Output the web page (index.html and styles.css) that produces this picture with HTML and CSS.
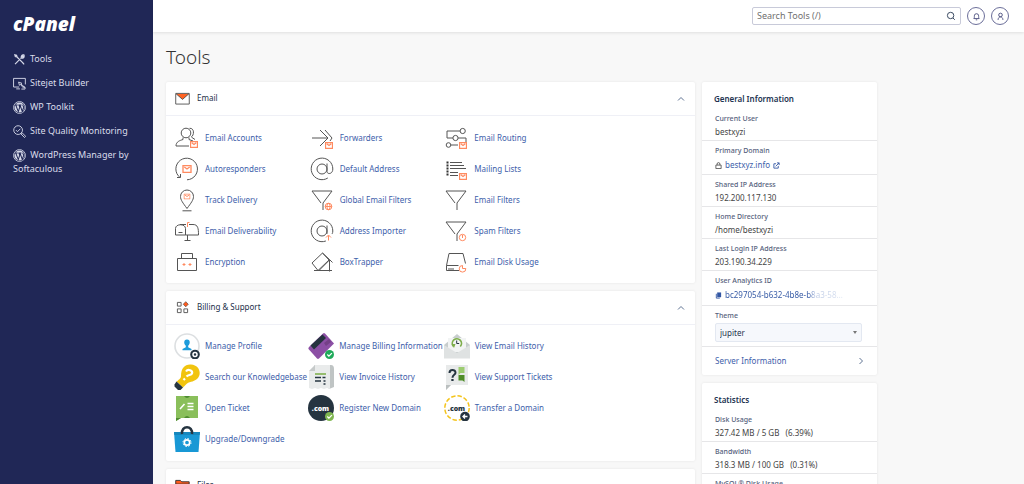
FILE: index.html
```html
<!DOCTYPE html>
<html lang="en">
<head>
<meta charset="utf-8">
<title>cPanel - Tools</title>
<link rel="stylesheet" href="styles.css">
</head>
<body>
<svg class="defs" aria-hidden="true">
  <symbol id="mail" viewBox="0 0 7 6"><path class="orange" d="M.5.5h6v5h-6zM1.500 1.500l2 1.500 2-1.500"/></symbol>
  <symbol id="wp" viewBox="0 0 14 14"><circle cx="7" cy="7" r="6.400" fill="none" stroke="#d5d8e8" stroke-width=".9"/><circle cx="7" cy="7" r="5.400" fill="#d5d8e8"/><path d="M2 4.300h3M3 4.400l2.700 7 1.600-4.800-1-2.200M5.800 4.300h3.300M7.600 4.500l2.400 6.800 1.500-4.500c.2-1-1.200-1.700-.8-3" fill="none" stroke="#202756" stroke-width="1.100"/></symbol>
  <symbol id="funnel" viewBox="0 0 24 24"><path class="line" d="M2 3h20l-9 12v7M2 3l9 12"/></symbol>
  <symbol id="at" viewBox="0 0 24 24"><circle class="line" cx="12" cy="12" r="5"/><path class="line" d="M17 6.500v8c0 3 5.800 3 5.800-2.500a10.800 10.800 0 1 0-5 9"/></symbol>
</svg>
<div class="app">
  <aside class="sidebar">
    <a class="logo" href="#">cPanel</a>
    <nav class="nav">
      <a href="#"><svg viewBox="0 0 14 14"><path class="pale thick" d="M4 4l7.500 7.500M2 2l1.800.5L4.500 4.500l-2-.6zM10 10l2 2.200M2.200 12L7 7.200M8 6l1-1c-.5-1.500.5-3 2-3L9.700 3.500l.9.900L12 3c.3 1.700-1.300 3-3 2.500"/></svg>Tools</a>
      <a href="#"><svg viewBox="0 0 14 14"><path class="pale" d="M13.300 8V1.500H.6v9.300h6M3.500 12.800h4M6 5.500l1 3.500 1-1 3.500 4 1-1L8.500 7.500l1-.8zM11 10l2 1v2H9"/></svg>Sitejet Builder</a>
      <a href="#"><svg><use href="#wp"/></svg>WP Toolkit</a>
      <a href="#"><svg viewBox="0 0 14 14"><circle class="pale" cx="5.500" cy="5.500" r="4.700"/><path class="pale" d="M3.200 5.500l1.600 1.700L8 4M8.700 8.700l1-.4 3.900 3.900-1.200 1.300-3.900-3.900z"/></svg>Site Quality Monitoring</a>
      <a href="#"><svg><use href="#wp"/></svg> WordPress Manager by Softaculous</a>
    </nav>
  </aside>
  <div class="page">
    <header class="topbar">
      <form class="search" role="search">
        <input type="search" placeholder="Search Tools (/)" aria-label="Search Tools">
        <button type="button" aria-label="Search"><svg viewBox="0 0 10 10"><circle class="ink" cx="4.600" cy="4.500" r="3.200"/><path class="ink" d="M7 7l1.800 1.800"/></svg></button>
      </form>
      <button class="round" type="button" aria-label="Notifications"><svg viewBox="0 0 10 10"><path class="navy" d="M2 7.300h6c-.8-1-.6-2-.6-3a2.400 2.400 0 0 0-4.800 0c0 1 .2 2-.6 3zM4.200 8.700h1.600"/></svg></button>
      <button class="round" type="button" aria-label="Account"><svg viewBox="0 0 10 10"><circle class="navy" cx="5" cy="3.300" r="2"/><path class="navy" d="M2.300 8.800c0-4.500 5.400-4.500 5.400 0"/></svg></button>
    </header>
    <main class="content">
      <h1>Tools</h1>
      <div class="columns">
        <div class="groups">
          <section class="card">
            <header class="card-head">
              <svg class="head-icon" viewBox="0 0 16 14"><path d="M1 2h14L8 8z" fill="#ff6323"/><path class="line" d="M.7 1.500h14.600v11.500H.7zM1 1.800L8 8l7-6.200"/></svg>
              <h2>Email</h2>
              <button class="toggle" type="button" aria-label="Collapse Email"><svg viewBox="0 0 8 6"><path class="slate" d="M1 4.500l3-3 3 3"/></svg></button>
            </header>
            <div class="items">
              <a href="#"><svg viewBox="0 0 24 24"><circle class="line" cx="11" cy="7" r="4.800"/><path class="line" d="M14.500 2.300c5-.5 5 7 1.500 9M8 11.500v2c-3 1-7 2-7 6.500h13M14 11.500v2l4 1.500M17 11.500l3 2"/><use href="#mail" x="15" y="15" width="8" height="7"/></svg>Email Accounts</a>
              <a href="#"><svg viewBox="0 0 24 24"><path class="line" d="M2 12h15M10 4l8 8-8 8M15 4l7 8-2 3"/><use href="#mail" x="15" y="16" width="8" height="7"/></svg>Forwarders</a>
              <a href="#"><svg viewBox="0 0 24 24"><path class="line" d="M16 5H3v7h6M14 12h8v4M7 19h7"/><circle class="line" cx="18.700" cy="5" r="2.600"/><circle class="line" cx="11.500" cy="12" r="2.600"/><circle class="line" cx="4.500" cy="19" r="2.300"/><use href="#mail" x="15" y="16" width="8" height="7"/></svg>Email Routing</a>
              <a href="#"><svg viewBox="0 0 24 24"><path class="line" d="M12 22.800A10.800 10.800 0 1 0 5 20.500M2 20.500h3.500V17"/><use href="#mail" x="7" y="8" width="10" height="8"/></svg>Autoresponders</a>
              <a href="#"><svg><use href="#at"/></svg>Default Address</a>
              <a href="#"><svg viewBox="0 0 24 24"><path class="dots" d="M3.500 4.500v15"/><path class="line" d="M6 5.500h12M6 8.500h14M6 11.500h16M6 15.500h8M6 18.500h8"/><use href="#mail" x="15" y="16" width="8" height="7"/></svg>Mailing Lists</a>
              <a href="#"><svg viewBox="0 0 24 24"><path class="line" d="M12 20.500C8 15 5.500 12 5.500 8.500a6.500 6.500 0 0 1 13 0c0 3.500-2.500 6.500-6.500 12zM7.500 22.800h9"/><use href="#mail" x="8.500" y="5.500" width="7" height="6"/></svg>Track Delivery</a>
              <a href="#"><svg viewBox="0 0 24 24"><use href="#funnel"/><circle cx="18.500" cy="18.500" r="4" fill="#fff"/><circle class="orange" cx="18.500" cy="18.500" r="3.300"/><path class="orange" d="M15.200 18.500h6.600M18.500 15.200c-2 2-2 4.600 0 6.600 2-2 2-4.600 0-6.600z"/></svg>Global Email Filters</a>
              <a href="#"><svg><use href="#funnel"/></svg>Email Filters</a>
              <a href="#"><svg viewBox="0 0 24 24"><path class="line" d="M.5 16V9.500c0-5 10-5 10 0V16zM5 5.500h13c5 0 5.500 4 5.500 10.500h-13M3.500 13.500h4M12.500 16v5.500M9.500 21.500h6"/><path d="M11 4h3v4h-3z" fill="#fff"/><path class="orange" d="M12.500 8V3.500h2"/></svg>Email Deliverability</a>
              <a href="#"><svg viewBox="0 0 24 24"><use href="#at"/><path d="M16 15h6v8h-6z" fill="#fff"/><path class="orange" d="M18.500 21.500v-5M16 18.500l2.500-2.500 2.500 2.500"/></svg>Address Importer</a>
              <a href="#"><svg viewBox="0 0 24 24"><use href="#funnel"/><circle cx="18.500" cy="18.500" r="4" fill="#fff"/><circle class="orange" cx="18.500" cy="18.500" r="3.200"/><path class="orange" d="M18.500 16v3"/></svg>Spam Filters</a>
              <a href="#"><svg viewBox="0 0 24 24"><path class="line" d="M2.500 8.500h19v12h-19zM6.500 8.500v-5h11v5"/><path class="orange" d="M7.500 14.500h3M9 13v3M13.500 14.500h3M15 13v3"/></svg>Encryption</a>
              <a href="#"><svg viewBox="0 0 24 24"><path class="line" d="M12.500 3L2 13l6 7.500L19 10zM12.500 3l7 6.500M19.500 9.500v12M4 20.500h18M19.500 9.500l3 3M9 20.500l10-10"/></svg>BoxTrapper</a>
              <a href="#"><svg viewBox="0 0 24 24"><path class="line" d="M15 20.500H2.500v-5L5 3.500h14l2.500 10M2.500 15.500h12M5 20v-2M7 20v-2M9 20v-2"/><path class="orange" d="M18.500 15.500v3h3.300a3.300 3.300 0 1 1-3.300-3z"/></svg>Email Disk Usage</a>
            </div>
          </section>

          <section class="card">
            <header class="card-head">
              <svg class="head-icon" viewBox="0 0 16 14"><path class="line" d="M2.500 1.500h4v4h-4zM2.500 8.500h4v4h-4zM9.500 8.500h4v4h-4z"/><path d="M11.500.7l2.700 2.800-2.700 2.800-2.700-2.800z" fill="#ff5a1c" stroke="#333" stroke-width=".6"/></svg>
              <h2>Billing &amp; Support</h2>
              <button class="toggle" type="button" aria-label="Collapse Billing &amp; Support"><svg viewBox="0 0 8 6"><path class="slate" d="M1 4.500l3-3 3 3"/></svg></button>
            </header>
            <div class="items colour">
              <a href="#"><svg viewBox="0 0 26 26"><circle cx="13" cy="13" r="12" fill="#fff" stroke="#dcdfe1" stroke-width="1.600"/><path d="M13 6.500c-4 0-3 5-1.200 6.200v1.500L8.500 16v1.200h9V16l-3.300-1.800v-1.500C16 11.500 17 6.500 13 6.500z" fill="#1d9bdb"/><circle cx="21" cy="21.500" r="4.800" fill="#253440"/><circle cx="21" cy="21.500" r="2" fill="none" stroke="#fff" stroke-width="1.500"/></svg>Manage Profile</a>
              <a href="#"><svg viewBox="0 0 26 26"><path d="M1 14L15 0.500q1-.8 2 0L26 10.500 11 25.500q-1 .8-2 0L.5 16q-.4-1 .5-2z" fill="#8c4fa5"/><path d="M2.500 12.500L14.500 1.500l3.500 3.500L6 16.500z" fill="#26323f"/><path d="M16 10l5-4 2 3-5 4z" fill="#744087"/><circle cx="21.500" cy="21.500" r="4.500" fill="#1faa5a"/><path class="tick" d="M19.300 21.500l1.600 1.600 3-3"/></svg>Manage Billing Information</a>
              <a href="#"><svg viewBox="0 0 26 26"><path d="M0 12L13 1l13 11v13H0z" fill="#c7cdcd"/><path d="M4 5h18v14H4z" fill="#f2f4f4"/><path d="M0 12l13 8 13-8v13.500H0z" fill="#dfe2e2"/><path d="M9.300 13.300A4.600 4.600 0 1 1 16.300 13.500" fill="none" stroke="#7eae4b" stroke-width="1.700"/><path d="M7.500 11h4l-1.500 4z" fill="#7eae4b"/><path d="M12.700 7.500v3h2.500" stroke="#253440" fill="none"/></svg>View Email History</a>
              <a href="#"><svg viewBox="0 0 26 26"><path d="M7 12C7 4 11 0 17 .5c9 .5 11 10 6 14.500-4 3.500-8 2-11.500 6L9 23.500 2.500 17.500C6 15 7 14 7 12z" fill="#f1c40f"/><path d="M2.500 17.500l6.500 6-2.500 2.500H4L.5 22.500v-2z" fill="#253440"/><path d="M12 7.500c2-3 7-1 6 2-1 2-3.500 1-5.500 3M11 14.500l-1.500 1.500" fill="none" stroke="#fff" stroke-width="2.200"/></svg>Search our Knowledgebase</a>
              <a href="#"><svg viewBox="0 0 26 26"><path d="M6 1h17q3 0 3 4v18l-5 2z" fill="#bfc4c4"/><path d="M1 7l6-6h15v24l-3-1-3 1-3-1-3 1-3-1-3 1-3-1z" fill="#e9ebeb"/><path d="M1 7l6-6v6z" fill="#c6caca"/><path d="M7 10h11" stroke="#78ad45" stroke-width="1.500"/><path d="M7 13.500h6M14.500 13.500h3M7 17h6M15.500 17h2M15.500 20h2" stroke="#253440" stroke-width="1.700"/></svg>View Invoice History</a>
              <a href="#"><svg viewBox="0 0 26 26"><path d="M2 1h22v20H7l-5 5z" fill="#e8eaea"/><path d="M2 26v-5h5z" fill="#bbc0c0"/><path d="M5.500 9c0-4 6-4 6-.3 0 2.300-3 2-3 5" fill="none" stroke="#253440" stroke-width="2"/><path d="M7.300 15h2.300v2H7.300z" fill="#253440"/><path d="M14.500 3h6v6h-4l-2 2z" fill="#9ccc70"/><path d="M14.500 11h6v7l-2-1.500h-4z" fill="#4f8d28"/></svg>View Support Tickets</a>
              <a href="#"><svg viewBox="0 0 26 26"><path d="M2 1h22v22H7l-5 3z" fill="#8abf5b"/><path d="M2 26v-3h5z" fill="#4e8b31"/><path d="M10 1h6q-3 4-6 0zM10 23h6q-3-4-6 0z" fill="#4e8b31"/><path d="M6 14l4.500-5M13.500 8.500h6M13.500 11.500h6M13.500 14.500h6" stroke="#fff" stroke-width="1.600"/></svg>Open Ticket</a>
              <a href="#"><svg viewBox="0 0 26 26"><circle cx="13" cy="13" r="13" fill="#253440"/><text class="domain" x="12.500" y="15.500" fill="#fff">.com</text><circle cx="21.500" cy="21.500" r="4.500" fill="#7fb650"/><path class="tick" d="M19.300 21.500l1.600 1.600 3-3"/></svg>Register New Domain</a>
              <a href="#"><svg viewBox="0 0 26 26"><circle cx="13" cy="13" r="12.200" fill="#fff" stroke="#f4c41c" stroke-width="1.500" stroke-dasharray="4.400 2"/><text class="domain" x="12.500" y="15.500" fill="#253440">.com</text><circle cx="21" cy="21.500" r="4.800" fill="#253440"/><path class="tick" d="M23.500 21.500h-4.500M21 19.500l-2 2 2 2"/></svg>Transfer a Domain</a>
              <a href="#"><svg viewBox="0 0 26 26"><path d="M0 6h26l-1.500 20h-23z" fill="#1898d5"/><path d="M0 6h26l-.4 3H.4z" fill="#1687bd"/><path d="M8 8c-1-9 11-9 10 0" fill="none" stroke="#253440" stroke-width="2.500"/><circle cx="13" cy="16.500" r="2.700" fill="none" stroke="#fff" stroke-width="1.700"/><circle cx="13" cy="16.500" r="4" fill="none" stroke="#fff" stroke-width="1" stroke-dasharray="1.600 1.540"/></svg>Upgrade/Downgrade</a>
            </div>
          </section>

          <section class="card">
            <header class="card-head">
              <svg class="head-icon" viewBox="0 0 16 14"><path d="M.7 1.500h5l1.500 1.500h8v10H.7z" fill="#ff5a1c" stroke="#333"/><path d="M1 5.500h14" stroke="#333"/></svg>
              <h2>Files</h2>
              <button class="toggle" type="button" aria-label="Collapse Files"><svg viewBox="0 0 8 6"><path class="slate" d="M1 4.500l3-3 3 3"/></svg></button>
            </header>
          </section>
        </div>

        <aside class="side">
          <section class="card">
            <h2 class="side-title">General Information</h2>
            <dl class="info">
              <div><dt>Current User</dt><dd>bestxyzi</dd></div>
              <div class="tall"><dt>Primary Domain</dt><dd><svg viewBox="0 0 8 8"><path class="lock" d="M1 3.500h6v4H1zM2.400 3.500V2.300a1.600 1.600 0 0 1 3.200 0v1.200"/></svg><a href="#">bestxyz.info</a><svg class="out" viewBox="0 0 8 8"><path class="blue" d="M3.500 2H1v5h5V4.500M3 5l4-4M4.500 1H7v2.500"/></svg></dd></div>
              <div><dt>Shared IP Address</dt><dd>192.200.117.130</dd></div>
              <div><dt>Home Directory</dt><dd>/home/bestxyzi</dd></div>
              <div><dt>Last Login IP Address</dt><dd>203.190.34.229</dd></div>
              <div class="taller"><dt>User Analytics ID</dt><dd><svg viewBox="0 0 8 8"><path d="M2.500.5h4.500v5.500H2.500z" fill="#3156a3"/><path class="blue" d="M1.500 2v5H5.500"/></svg><a class="fade" href="#">bc297054-b632-4b8e-b8a3-58…</a></dd></div>
            </dl>
            <div class="theme">
              <label for="theme">Theme</label>
              <div class="select"><select id="theme"><option>jupiter</option></select></div>
            </div>
            <a class="server" href="#">Server Information<svg viewBox="0 0 6 8"><path class="slate" d="M1.500 1l3 3-3 3"/></svg></a>
          </section>
          <section class="card">
            <h2 class="side-title">Statistics</h2>
            <dl class="info">
              <div><dt>Disk Usage</dt><dd>327.42 MB / 5 GB &nbsp; (6.39%)</dd></div>
              <div><dt>Bandwidth</dt><dd>318.3 MB / 100 GB &nbsp; (0.31%)</dd></div>
              <div><dt>MySQL® Disk Usage</dt></div>
            </dl>
          </section>
        </aside>
      </div>
    </main>
  </div>
</div>
</body>
</html>
```
FILE: styles.css
```css
* { box-sizing: border-box; }
body {
  margin: 0;
  background: #f8f8f8;
  color: #444;
  font: 8px/12px "Noto Sans", sans-serif;
}
a { color: #3d60aa; text-decoration: none; }
button { padding: 0; border: 0; background: none; }
h1, h2, dl, dd { margin: 0; }
svg { flex: none; }
.defs { position: absolute; width: 0; height: 0; }

.line, .pale, .orange, .navy, .ink, .slate, .blue, .lock, .tick { fill: none; }
.line { stroke: #555; stroke-width: 1; }
.pale { stroke: #d5d8e8; stroke-width: 1; }
.thick { stroke-width: 1.3px; }
.orange { stroke: #ff8a60; stroke-width: 1; }
.navy { stroke: #474b7c; stroke-width: 1; }
.ink { stroke: #3c4c63; stroke-width: 1; }
.slate { stroke: #5f7393; stroke-width: 1; }
.blue { stroke: #3156a3; stroke-width: 1; }
.lock { stroke: #555; stroke-width: 1; }
.tick { stroke: #fff; stroke-width: 1.3px; }
.dots { fill: none; stroke: #333; stroke-width: 2; stroke-dasharray: 2 1; }
.domain { font: 800 7px "Open Sans", sans-serif; text-anchor: middle; }

.app { display: flex; height: 100vh; overflow: hidden; }
.sidebar { flex: none; width: 153px; padding: 14px 13px; background: #202756; }
.logo {
  display: block;
  color: #fff;
  font: italic 800 19px/20px "Open Sans", sans-serif;
}
.nav { display: flex; flex-direction: column; gap: 10px; margin-top: 18px; }
.nav a { color: #dadcea; font-size: 9px; line-height: 13px; }
.nav svg { width: 13px; height: 13px; margin-right: 4px; vertical-align: middle; }
.nav a:last-child svg { margin-right: 2px; }

.page { flex: 1; min-width: 0; }
.topbar {
  display: flex;
  align-items: center;
  justify-content: flex-end;
  gap: 6px;
  height: 32px;
  padding: 0 15px;
  background: #fff;
  box-shadow: 0 1px 3px #0000001a;
}
.search {
  display: flex;
  align-items: center;
  width: 209px;
  height: 18px;
  padding: 0 4px;
  border: 1px solid #c8cad9;
  border-radius: 2px;
}
.search input {
  flex: 1;
  min-width: 0;
  padding: 0;
  border: 0;
  outline: 0;
  background: none;
  font: 9px/14px "Noto Sans", sans-serif;
}
.search input::placeholder { color: #707070; }
.search button, .search svg { width: 10px; height: 10px; display: block; }
.round {
  display: grid;
  place-items: center;
  width: 18px;
  height: 18px;
  border: 1px solid #6c6f9a;
  border-radius: 50%;
}
.round svg { width: 9px; height: 9px; }

.content { padding: 12px 13px; }
h1 { font: 300 19px/26px "Noto Sans", sans-serif; color: #333; }
.columns { display: flex; align-items: flex-start; gap: 7px; max-width: 711px; margin-top: 12px; }
.groups { flex: 1; min-width: 0; }
.side { flex: none; width: 175px; }
.card {
  margin-bottom: 8px;
  border-radius: 2px;
  background: #fff;
  box-shadow: 0 0 3px #00000014;
}
.card-head {
  display: flex;
  align-items: center;
  height: 34px;
  padding: 0 10px 0 9px;
  border-bottom: 1px solid #eff0f6;
}
.card-head h2 {
  flex: 1;
  margin-left: 7px;
  padding-bottom: 2px;
  font-size: 8px;
  font-weight: 400;
  color: #222f49;
}
.head-icon { width: 15px; height: 13px; }
.toggle svg { display: block; width: 8px; height: 6px; }
.items {
  display: grid;
  grid-template-columns: repeat(3, 1fr);
  grid-auto-rows: 31px;
  max-width: 411px;
  padding: 6px 0 6px 7px;
}
.items a { display: flex; align-items: center; gap: 6px; white-space: nowrap; }
.items svg { width: 24px; height: 24px; margin-left: 2px; }
.items.colour { padding: 5px 0 7px 7px; }
.items.colour a { gap: 5px; }
.items.colour svg { width: 26px; height: 26px; margin-left: 1px; }

.side-title { padding: 10px 12px 3px; font-size: 8px; line-height: 14px; font-weight: 600; color: #22324f; }
.info > div { height: 32px; padding: 4px 13px 0; border-bottom: 1px solid #e6e6e8; }
.info > .tall { height: 34px; }
.info > .taller { height: 35px; }
dt, .theme label { display: block; color: #55617c; font-size: 7px; line-height: 12px; font-weight: 500; }
dd { display: flex; align-items: center; line-height: 14px; white-space: nowrap; }
.tall dd, .taller dd { line-height: 16px; }
dd svg { width: 7px; height: 7px; margin-right: 3px; }
dd .out { margin: 0 0 0 3px; }
.fade {
  background: linear-gradient(90deg, #3156a3 70%, #b9c7e4 76%, #dfe6f3);
  background-clip: text;
  color: transparent;
}
.theme { padding: 4px 15px 2px 13px; height: 41px; border-bottom: 1px solid #e6e6e8; }
.select { position: relative; margin-top: 1px; }
.select::after {
  content: "";
  position: absolute;
  right: 5px;
  top: 8px;
  border: 2px solid transparent;
  border-top: 3px solid #777;
}
select {
  display: block;
  width: 100%;
  height: 19px;
  padding: 0 4px;
  appearance: none;
  border: 1px solid #e3e8f1;
  border-radius: 2px;
  background: #f6f8fc;
  color: #26344e;
  font: 8px/16px "Noto Sans", sans-serif;
}
.server { display: flex; align-items: center; justify-content: space-between; height: 28px; padding: 0 13px; }
.server svg { width: 6px; height: 8px; }
```
